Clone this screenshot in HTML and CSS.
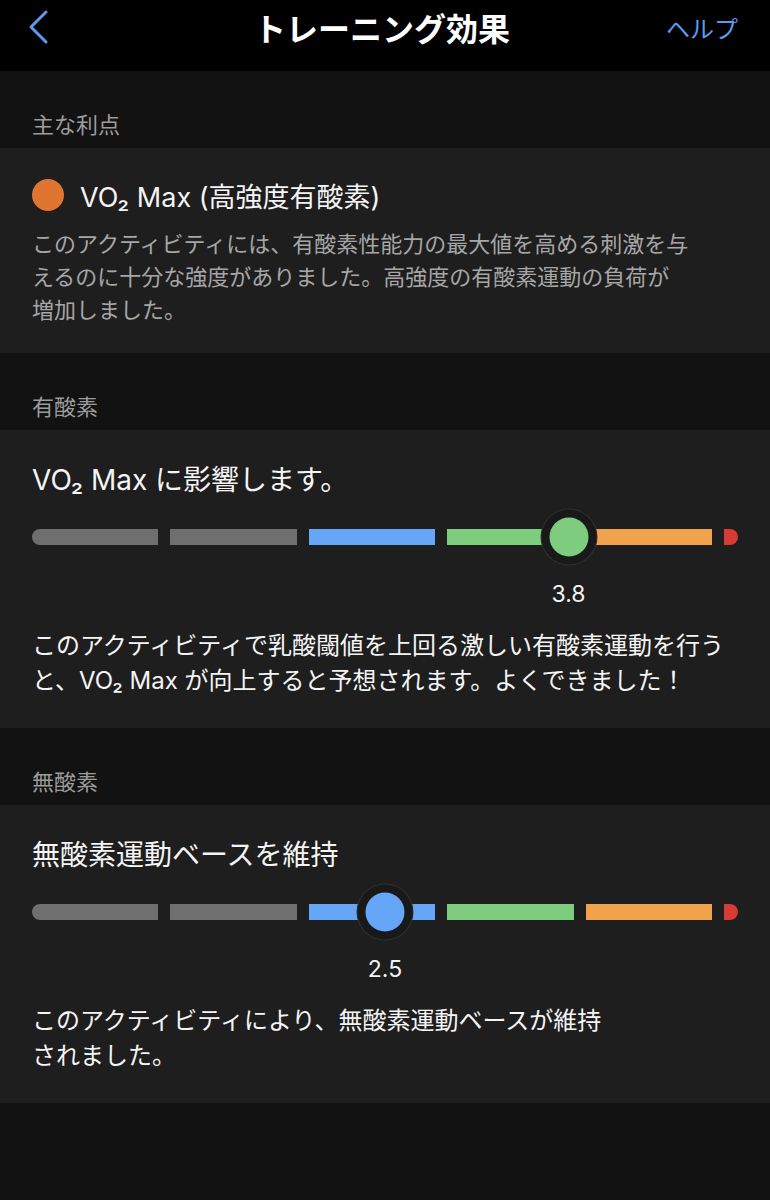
FILE: index.html
```html
<!DOCTYPE html>
<html lang="ja">

<head>
    <meta charset="UTF-8">
    <meta name="viewport" content="width=device-width, initial-scale=1.0">
    <title>トレーニング効果</title>
    <link rel="stylesheet" href="styles.css">
</head>

<body>
    <header class="nav">
        <a class="nav-back" href="#">
            <svg width="24" height="36" viewBox="0 0 24 36">
                <path d="M20 3 L5 18 L20 33" fill="none" stroke="#5b9bec" stroke-width="3" stroke-linecap="round" stroke-linejoin="round" />
            </svg>
        </a>
        <h1 class="nav-title">トレーニング効果</h1>
        <a class="nav-help" href="#">ヘルプ</a>
    </header>

    <main>
        <div class="section-label">主な利点</div>
        <section class="card card-benefit">
            <div class="benefit">
                <span class="dot"></span>
                <span>VO₂ Max (高強度有酸素)</span>
            </div>
            <p class="benefit-text">このアクティビティには、有酸素性能力の最大値を高める刺激を与<br>えるのに十分な強度がありました。高強度の有酸素運動の負荷が<br>増加しました。</p>
        </section>

        <div class="section-label">有酸素</div>
        <section class="card">
            <h2 class="card-title">VO₂ Max に影響します。</h2>
            <div class="meter">
                <div class="track">
                    <span class="seg seg-gray first"></span>
                    <span class="seg seg-gray"></span>
                    <span class="seg seg-blue"></span>
                    <span class="seg seg-green"></span>
                    <span class="seg seg-orange"></span>
                    <span class="seg-end"></span>
                </div>
                <span class="thumb thumb-green" style="left: 76%;"></span>
            </div>
            <div class="meter-value"><span style="left: 76%;">3.8</span></div>
            <p class="card-text">このアクティビティで乳酸閾値を上回る激しい有酸素運動を行う<br>と、VO₂ Max が向上すると予想されます。よくできました！</p>
        </section>

        <div class="section-label">無酸素</div>
        <section class="card">
            <h2 class="card-title">無酸素運動ベースを維持</h2>
            <div class="meter">
                <div class="track">
                    <span class="seg seg-gray first"></span>
                    <span class="seg seg-gray"></span>
                    <span class="seg seg-blue"></span>
                    <span class="seg seg-green"></span>
                    <span class="seg seg-orange"></span>
                    <span class="seg-end"></span>
                </div>
                <span class="thumb thumb-blue" style="left: 50%;"></span>
            </div>
            <div class="meter-value"><span style="left: 50%;">2.5</span></div>
            <p class="card-text">このアクティビティにより、無酸素運動ベースが維持<br>されました。</p>
        </section>
    </main>
</body>

</html>
```

FILE: styles.css
```css
* {
    box-sizing: border-box;
}

body {
    margin: 0;
    min-height: 100vh;
    background-color: #121212;
    color: #f2f2f2;
    font-family: Inter, "Noto Sans CJK JP", sans-serif;
}

/* top bar */
.nav {
    height: 71px;
    padding: 0 32px 17px 26px;
    background: #000;
    display: grid;
    grid-template-columns: 1fr auto 1fr;
    align-items: center;
}

.nav-back {
    display: flex;
    height: 36px;
}

.nav-title {
    margin: 0;
    font-size: 32px;
    font-weight: bold;
    color: #fff;
}

.nav-help {
    justify-self: end;
    color: #5b9bec;
    font-size: 24px;
    text-decoration: none;
}

.section-label {
    padding: 42px 32px 10px;
    line-height: 25px;
    font-size: 22px;
    color: #9c9c9c;
}

.card {
    background: #1e1e1e;
    padding: 32px 32px 30px;
}

.card-benefit {
    padding: 29px 32px 26px;
}

/* main benefit card */
.benefit {
    display: flex;
    align-items: center;
    gap: 16px;
    height: 36px;
    font-size: 27px;
    color: #f4f4f4;
}

.dot {
    width: 32px;
    height: 32px;
    border-radius: 50%;
    background: #e07532;
}

.benefit-text {
    margin: 15px 0 0;
    font-size: 22px;
    line-height: 33px;
    color: #a6a6a6;
}

.card-title {
    margin: 0;
    font-size: 28px;
    font-weight: normal;
    line-height: 36px;
    color: #f4f4f4;
}

/* five zone meter */
.meter {
    position: relative;
    height: 56px;
    margin-top: 11px;
    display: flex;
    align-items: center;
}

.track {
    display: flex;
    gap: 12px;
    width: 100%;
    height: 16px;
}

.seg {
    flex: 1;
}

.seg.first {
    border-radius: 8px 0 0 8px;
}

.seg-gray {
    background: #6f6f6f;
}

.seg-blue {
    background: #65a6f6;
}

.seg-green {
    background: #7ecd7e;
}

.seg-orange {
    background: #f0a24d;
}

.seg-end {
    width: 14px;
    background: #d63b35;
    border-radius: 0 8px 8px 0;
}

.thumb {
    position: absolute;
    top: 50%;
    width: 39px;
    height: 39px;
    border-radius: 50%;
    transform: translate(-50%, -50%);
    box-shadow: 0 0 0 8px #191919, 0 0 0 9px #303030;
}

.thumb-green {
    background: #7ecd7e;
}

.thumb-blue {
    background: #65a6f6;
}

.meter-value {
    position: relative;
    height: 30px;
    margin-top: 14px;
}

.meter-value span {
    position: absolute;
    top: 0;
    transform: translateX(-50%);
    font-size: 23px;
    line-height: 30px;
    color: #f2f2f2;
}

.card-text {
    margin: 19px 0 0;
    font-size: 24px;
    line-height: 35px;
    color: #f4f4f4;
}
```
